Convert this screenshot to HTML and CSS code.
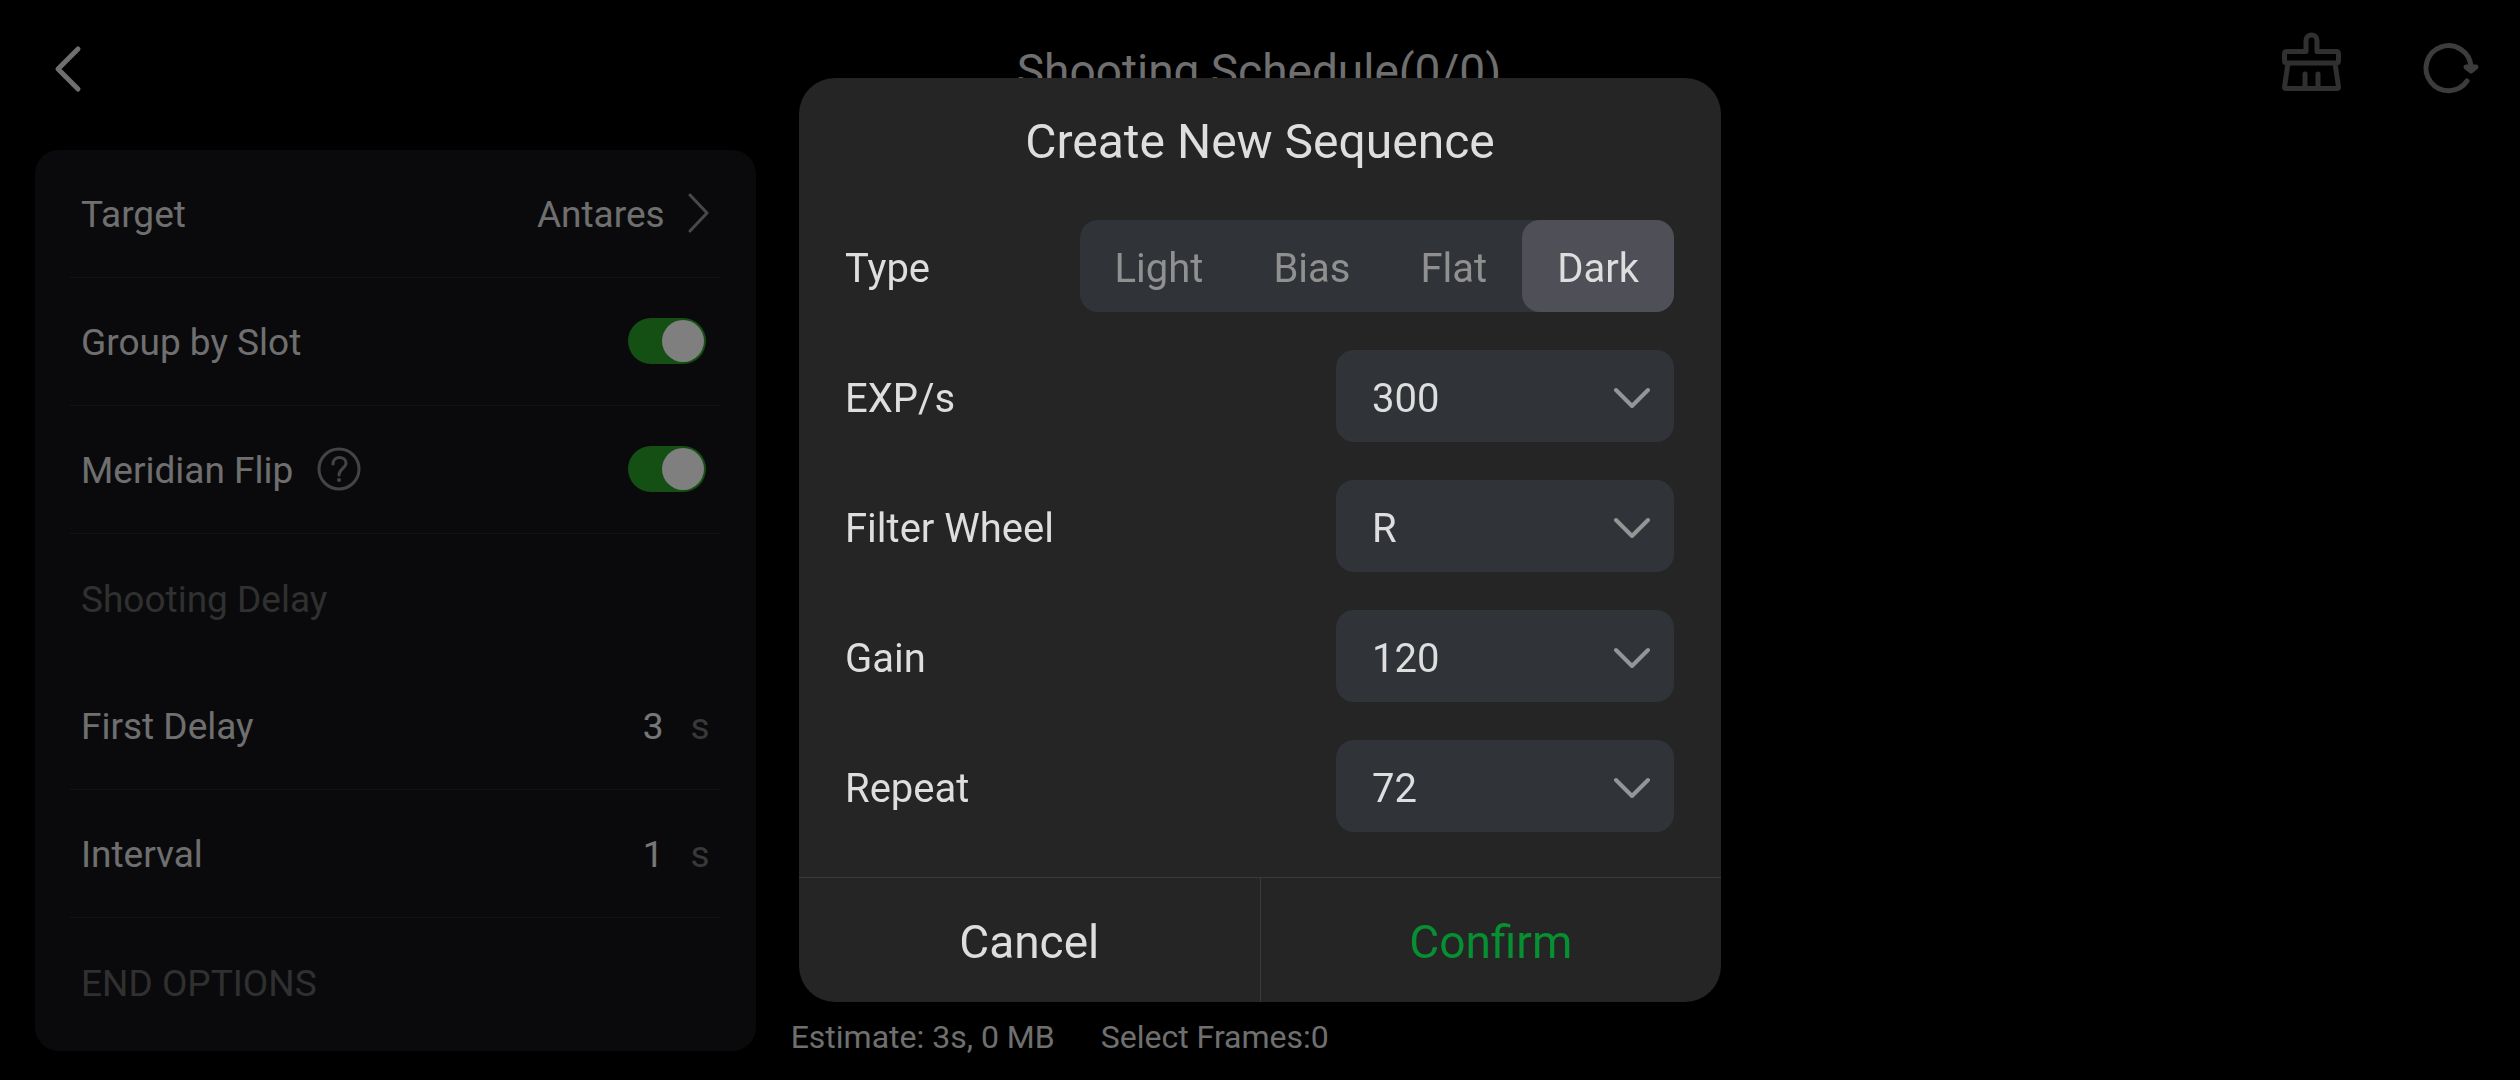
FILE: index.html
```html
<!DOCTYPE html>
<html lang="en">
<head>
    <meta charset="UTF-8">
    <meta name="viewport" content="width=device-width, initial-scale=1.0">
    <title>Shooting Schedule</title>
    <link rel="stylesheet" href="styles.css">
</head>
<body>
    <div class="page">
        <header class="topbar">
            <button class="icon-btn" type="button" aria-label="Back">
                <svg width="66" height="66" viewBox="0 0 66 66"><path d="M43 14 L23 34 L43 54"/></svg>
            </button>
            <h1>Shooting Schedule(0/0)</h1>
            <div class="actions">
                <button class="icon-btn clear" type="button" aria-label="Clear schedule">
                    <svg width="72" height="72" viewBox="0 6 72 72"><path d="M31 25.500 H12 Q9.500 25.500 9.500 28 V34.500 Q9.500 37 12 37 H61 Q63.500 37 63.500 34.500 V28 Q63.500 25.500 61 25.500 H42 V14.500 A5.500 5.500 0 0 0 31 14.500 Z M13 37 L9.500 61 Q9.500 62.500 11 62.500 H62 Q63.500 62.500 63.500 61 L60 37 M30 48 V62 M43 48 V62"/></svg>
                </button>
                <button class="icon-btn refresh" type="button" aria-label="Refresh">
                    <svg width="72" height="72" viewBox="0 0 72 72"><path d="M56 49 A22.500 22.500 0 1 1 60 35"/><path class="tip" d="M55 35 L60 39 L65 35 Z"/></svg>
                </button>
            </div>
        </header>

        <main class="layout">
            <section class="panel">
                <div class="row">
                    <span>Target</span>
                    <button class="link-btn" type="button">
                        <span>Antares</span>
                        <svg width="22" height="40" viewBox="0 0 22 40"><path d="M2 2 L19 20 L2 38"/></svg>
                    </button>
                </div>
                <div class="row">
                    <label for="group">Group by Slot</label>
                    <input class="toggle" id="group" type="checkbox" checked>
                </div>
                <div class="row">
                    <div class="with-help">
                        <label for="flip">Meridian Flip</label>
                        <button class="help" type="button" aria-label="About meridian flip">
                            <svg width="44" height="44" viewBox="0 0 44 44"><circle cx="22" cy="22" r="20"/><path d="M16 17 C16 8 29 9 29 16 C29 21 22 22 22 28"/><circle class="dot" cx="22" cy="33" r="2"/></svg>
                        </button>
                    </div>
                    <input class="toggle" id="flip" type="checkbox" checked>
                </div>
                <h2 class="row group-title"><span>Shooting Delay</span></h2>
                <div class="row">
                    <label for="first-delay">First Delay</label>
                    <span class="value"><input id="first-delay" type="text" inputmode="numeric" value="3"><span class="unit">s</span></span>
                </div>
                <div class="row">
                    <label for="interval">Interval</label>
                    <span class="value"><input id="interval" type="text" inputmode="numeric" value="1"><span class="unit">s</span></span>
                </div>
                <h2 class="row group-title"><span>END OPTIONS</span></h2>
            </section>

            <section class="frames">
                <p class="status"><span>Estimate: 3s, 0 MB</span><span>Select Frames:0</span></p>
            </section>
        </main>
    </div>

    <div class="overlay">
        <form class="modal" role="dialog" aria-labelledby="modal-title">
            <h2 class="modal-title" id="modal-title">Create New Sequence</h2>
            <div class="fields">
                <div class="field" role="radiogroup" aria-labelledby="type-label">
                    <span class="name" id="type-label">Type</span>
                    <div class="segments">
                        <label><input type="radio" name="type" value="light">Light</label>
                        <label><input type="radio" name="type" value="bias">Bias</label>
                        <label><input type="radio" name="type" value="flat">Flat</label>
                        <label><input type="radio" name="type" value="dark" checked>Dark</label>
                    </div>
                </div>
                <div class="field">
                    <label class="name" for="exp">EXP/s</label>
                    <div class="select">
                        <select id="exp"><option>300</option></select>
                        <svg width="40" height="24" viewBox="0 -2 40 24"><path d="M4 4 L20 20 L36 4"/></svg>
                    </div>
                </div>
                <div class="field">
                    <label class="name" for="filter">Filter Wheel</label>
                    <div class="select">
                        <select id="filter"><option>R</option></select>
                        <svg width="40" height="24" viewBox="0 -2 40 24"><path d="M4 4 L20 20 L36 4"/></svg>
                    </div>
                </div>
                <div class="field">
                    <label class="name" for="gain">Gain</label>
                    <div class="select">
                        <select id="gain"><option>120</option></select>
                        <svg width="40" height="24" viewBox="0 -2 40 24"><path d="M4 4 L20 20 L36 4"/></svg>
                    </div>
                </div>
                <div class="field">
                    <label class="name" for="repeat">Repeat</label>
                    <div class="select">
                        <select id="repeat"><option>72</option></select>
                        <svg width="40" height="24" viewBox="0 -2 40 24"><path d="M4 4 L20 20 L36 4"/></svg>
                    </div>
                </div>
            </div>
            <div class="buttons">
                <button type="button">Cancel</button>
                <button class="confirm" type="submit">Confirm</button>
            </div>
        </form>
    </div>
</body>
</html>
```
FILE: styles.css
```css
* {
    box-sizing: border-box;
}
body {
    margin: 0;
    background: #000;
    color: #dedede;
    font-family: Roboto, Arial, sans-serif;
    font-size: 37px;
}
h1, h2, p {
    margin: 0;
    font-weight: 400;
}
button, input, select {
    margin: 0;
    padding: 0;
    border: none;
    background: none;
    color: inherit;
    font: inherit;
}
button, select, label {
    cursor: pointer;
}
svg {
    display: block;
    fill: none;
    stroke: currentColor;
    stroke-linecap: round;
    stroke-linejoin: round;
}
.page {
    min-height: 100vh;
    display: flex;
    flex-direction: column;
}

/* top bar */
.topbar {
    height: 150px;
    padding: 0 37px 14px 35px;
    display: grid;
    grid-template-columns: 1fr auto 1fr;
    align-items: center;
}
.topbar h1 {
    padding-top: 6px;
    font-size: 46px;
}
.topbar svg {
    stroke-width: 5;
}
.actions {
    display: flex;
    justify-content: flex-end;
    gap: 64px;
}
.clear {
    color: #606060;
}
.refresh {
    color: #787878;
}
.tip {
    fill: currentColor;
}

/* settings panel */
.layout {
    flex: 1;
    display: grid;
    grid-template-columns: 29fr 71fr;
    padding: 0 0 29px 35px;
}
.panel {
    padding: 0 35px;
    background: #141518;
    border-radius: 24px;
}
.row {
    height: 128px;
    padding: 0 11px 2px;
    display: flex;
    align-items: center;
    justify-content: space-between;
    border-bottom: 1px solid #262626;
}
.row label,
.row > span,
.link-btn span {
    padding-top: 4px;
}
.group-title {
    border-bottom: none;
    color: #606060;
    font-size: 37px;
}
.link-btn {
    display: flex;
    align-items: center;
    gap: 23px;
}
.link-btn svg {
    color: #909090;
    stroke-width: 3;
}
.with-help {
    display: flex;
    align-items: center;
    gap: 24px;
}
.help {
    color: #888;
}
.help svg {
    stroke-width: 3;
}
.help .dot {
    fill: currentColor;
    stroke: none;
}
.toggle {
    appearance: none;
    width: 78px;
    height: 46px;
    padding: 2px;
    margin-right: 4px;
    display: flex;
    border-radius: 23px;
    background: #444;
    cursor: pointer;
}
.toggle::before {
    content: "";
    width: 42px;
    height: 42px;
    border-radius: 50%;
    background: #fff;
}
.toggle:checked {
    justify-content: flex-end;
    background: #28a028;
}
.value {
    display: flex;
    gap: 27px;
}
.value input {
    width: 120px;
    color: #eee;
    text-align: right;
}
.unit {
    color: #707070;
}
.frames {
    display: flex;
    align-items: flex-end;
    padding-left: 35px;
}
.status {
    display: flex;
    gap: 46px;
    font-size: 32px;
    line-height: 28px;
}

/* dialog */
.overlay {
    position: fixed;
    inset: 0;
    display: flex;
    align-items: center;
    justify-content: center;
    background: rgba(0, 0, 0, 0.5);
}
.modal {
    width: 922px;
    max-width: 94%;
    padding-top: 36px;
    background: #252525;
    border-radius: 36px;
    font-size: 40px;
    overflow: hidden;
}
.modal-title {
    font-size: 48px;
    line-height: 56px;
    text-align: center;
}
.fields {
    padding: 50px 47px 45px 46px;
    display: flex;
    flex-direction: column;
    gap: 38px;
}
.field {
    display: flex;
    align-items: center;
    justify-content: space-between;
}
.name {
    padding-top: 4px;
}
.segments {
    display: flex;
    background: #303338;
    border-radius: 18px;
    color: #909090;
}
.segments label {
    height: 92px;
    padding: 4px 35px 0;
    display: flex;
    align-items: center;
    border-radius: 18px;
}
.segments input {
    appearance: none;
}
.segments label:has(input:checked) {
    background: #4f4f58;
    color: #dedede;
}
.select {
    width: 338px;
    display: grid;
    align-items: center;
    background: #303338;
    border-radius: 18px;
}
.select select,
.select svg {
    grid-area: 1 / 1;
}
.select select {
    appearance: none;
    height: 92px;
    padding: 4px 36px 0;
}
.select svg {
    justify-self: end;
    margin-right: 22px;
    color: #959595;
    stroke-width: 4;
    pointer-events: none;
}
.buttons {
    display: flex;
    border-top: 1px solid #3a3a3a;
}
.buttons button {
    flex: 1;
    height: 124px;
    padding-top: 4px;
    font-size: 46px;
}
.buttons .confirm {
    border-left: 1px solid #3a3a3a;
    color: #069031;
}
```
